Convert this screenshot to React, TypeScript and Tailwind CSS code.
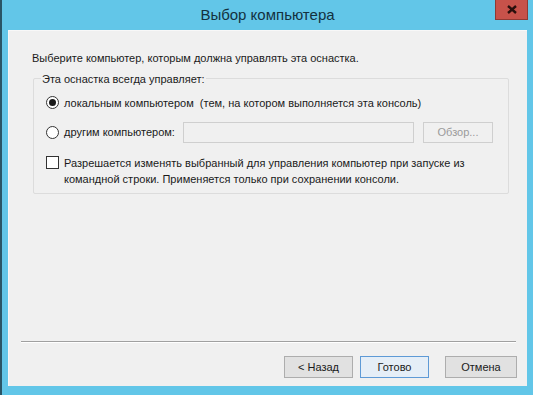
import React from 'react';

const App = () => {
  return (
    <div
      className="w-[533px] h-[395px] bg-[#62c6e8] border-l-2 border-[#2a5566] flex flex-col overflow-hidden"
      style={{ fontFamily: '"Liberation Sans", Arial, sans-serif' }}
    >
      {/* Title bar */}
      <div className="relative h-[30px] flex items-center justify-center shrink-0">
        <span className="text-[15px] text-[#13313f] pt-[1px]">Выбор компьютера</span>
        <div className="absolute right-[5px] top-0 w-[33px] h-[20px] bg-[#c7524a] border border-[#8f3a33] border-t-0 flex items-center justify-center">
          <svg width="10" height="9" viewBox="0 0 10 9">
            <path d="M1 1 L9 8 M9 1 L1 8" stroke="#2a0f0c" strokeWidth="2.4" />
          </svg>
        </div>
      </div>

      {/* Client area */}
      <div className="ml-[6px] mr-[6px] h-[356px] bg-[#f0f0f0] border-t border-l border-[#f8f8f8] flex flex-col text-[11px] text-[#1a1a1a]">
        <div className="pl-[23px] pt-[19px]">Выберите компьютер, которым должна управлять эта оснастка.</div>

        {/* Group box */}
        <div className="relative ml-[24px] mr-[18px] mt-[11px] h-[116px] border border-[#dcdcdc] rounded-[2px] px-[12px] pt-[16px]">
          <span className="absolute left-[7px] top-[-8px] bg-[#f0f0f0] px-[1px]">Эта оснастка всегда управляет:</span>

          <div className="flex items-center gap-[5px]">
            <span className="w-[13px] h-[13px] rounded-full border border-[#333] bg-white flex items-center justify-center shrink-0">
              <span className="w-[7px] h-[7px] rounded-full bg-[#1a1a1a]" />
            </span>
            <span className="whitespace-nowrap">локальным компьютером&nbsp;&nbsp;(тем, на котором выполняется эта консоль)</span>
          </div>

          <div className="flex items-center gap-[5px] mt-[11px]">
            <span className="w-[13px] h-[13px] rounded-full border border-[#333] bg-white shrink-0" />
            <span className="w-[114px] whitespace-nowrap shrink-0">другим компьютером:</span>
            <div className="w-[231px] h-[21px] border border-[#cfcfcf] bg-[#f0f0f0] shrink-0" />
            <div className="ml-[4px] w-[70px] h-[21px] border border-[#cfcfcf] bg-[#f0f0f0] flex items-center justify-center text-[#9a9a9a] shrink-0">
              Обзор...
            </div>
          </div>

          <div className="flex items-start gap-[5px] mt-[12px]">
            <span className="w-[13px] h-[13px] mt-[1px] border border-[#333] bg-white shrink-0" />
            <span className="leading-[16px]">
              Разрешается изменять выбранный для управления компьютер при запуске из
              <br />
              командной строки. Применяется только при сохранении консоли.
            </span>
          </div>
        </div>

        <div className="flex-1" />

        {/* Separator */}
        <div className="ml-[12px] mr-[11px] h-[2px] border-t border-[#a0a0a0] border-b-white border-b" />

        {/* Buttons */}
        <div className="flex justify-end gap-[7px] pr-[10px] pt-[13px] pb-[8px]">
          <button className="w-[69px] h-[22px] border border-[#adadad] bg-[#e1e1e1] text-[11px] text-[#1a1a1a]">&lt; Назад</button>
          <button className="w-[69px] h-[22px] border border-[#5e9ad6] bg-[#e5eef7] text-[11px] text-[#1a1a1a]">Готово</button>
          <button className="w-[72px] h-[22px] ml-[9px] border border-[#adadad] bg-[#e1e1e1] text-[11px] text-[#1a1a1a]">Отмена</button>
        </div>
      </div>
    </div>
  );
};

export default App;
